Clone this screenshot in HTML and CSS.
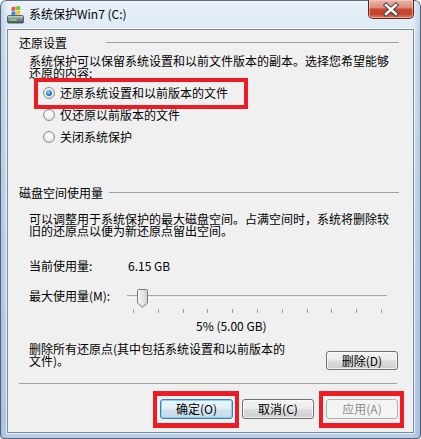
FILE: index.html
```html
<!DOCTYPE html>
<html lang="zh-CN">
<head>
<meta charset="utf-8">
<title>系统保护Win7 (C:)</title>
<link rel="stylesheet" href="styles.css">
</head>
<body>
<div class="window">
  <div class="titlebar">
    <svg class="app-icon" width="18" height="18" viewBox="0 0 18 18">
      <defs>
        <linearGradient id="drv" x1="0" y1="0" x2="0" y2="1">
          <stop offset="0" stop-color="#d9dfe5"/>
          <stop offset="0.35" stop-color="#8f9ba6"/>
          <stop offset="1" stop-color="#46515c"/>
        </linearGradient>
      </defs>
      <path d="M4.5 1.2 L8.4 0.6 L8.4 4.4 L4.5 5 Z" fill="#f0562a"/>
      <path d="M9.2 0.5 L13.2 0 L13.2 3.8 L9.2 4.3 Z" fill="#6fbf2e"/>
      <path d="M4.5 5.8 L8.4 5.2 L8.4 9 L4.5 9.6 Z" fill="#2a8de0"/>
      <path d="M9.2 5.1 L13.2 4.6 L13.2 8.4 L9.2 8.9 Z" fill="#f8c01a"/>
      <rect x="0.5" y="9.5" width="16" height="7.5" rx="1.2" fill="url(#drv)" stroke="#3d4650" stroke-width="0.8"/>
      <rect x="2.5" y="13.2" width="7" height="1.6" fill="#7fe05a"/>
    </svg>
    <span class="title">系统保护Win7 (C:)</span>
    <div class="close">
      <svg width="46" height="19" viewBox="0 0 46 19">
        <path d="M18.5 5 L28.5 14 M28.5 5 L18.5 14" stroke="#3a3a3a" stroke-width="4.6" stroke-linecap="square"/>
        <path d="M18.5 5 L28.5 14 M28.5 5 L18.5 14" stroke="#ffffff" stroke-width="2.6" stroke-linecap="square"/>
      </svg>
    </div>
  </div>

  <div class="client">
    <div class="group-head">
      <span>还原设置</span><span class="rule rule-first"></span>
    </div>
    <p class="desc">系统保护可以保留系统设置和以前文件版本的副本。选择您希望能够<br>还原的内容:</p>

    <div class="radios">
      <div class="radio"><span class="circle checked"></span><span>还原系统设置和以前版本的文件</span></div>
      <div class="radio"><span class="circle"></span><span>仅还原以前版本的文件</span></div>
      <div class="radio"><span class="circle"></span><span>关闭系统保护</span></div>
    </div>

    <div class="group-head group-second">
      <span>磁盘空间使用量</span><span class="rule rule-second"></span>
    </div>
    <p class="desc desc-second">可以调整用于系统保护的最大磁盘空间。占满空间时，系统将删除较<br>旧的还原点以便为新还原点留出空间。</p>

    <div class="stat">
      <span class="stat-label">当前使用量:</span>
      <span class="stat-value">6.15 GB</span>
    </div>

    <div class="max-row">
      <span class="max-label">最大使用量(M):</span>
      <div class="slider">
        <div class="track"></div>
        <div class="thumb">
          <svg width="11" height="19" viewBox="0 0 11 19">
            <defs>
              <linearGradient id="th" x1="0" y1="0" x2="1" y2="0">
                <stop offset="0" stop-color="#f6f6f6"/>
                <stop offset="0.5" stop-color="#e6e6e6"/>
                <stop offset="1" stop-color="#cfcfcf"/>
              </linearGradient>
            </defs>
            <path d="M1.5 0.5 H9.5 Q10.5 0.5 10.5 1.5 V14 L5.5 18.3 L0.5 14 V1.5 Q0.5 0.5 1.5 0.5 Z" fill="url(#th)" stroke="#7a7a7a"/>
          </svg>
        </div>
      </div>
    </div>

    <div class="ticks">
      <i></i><i></i><i></i><i></i><i></i><i></i><i></i><i></i><i></i><i></i><i></i>
    </div>

    <div class="percent">5% (5.00 GB)</div>

    <div class="delete-row">
      <p class="delete-text">删除所有还原点(其中包括系统设置和以前版本的<br>文件)。</p>
      <div class="btn btn-delete">删除(D)</div>
    </div>

    <div class="separator"></div>

    <div class="actions">
      <div class="btn btn-default">确定(O)</div>
      <div class="btn btn-cancel">取消(C)</div>
      <div class="btn btn-disabled">应用(A)</div>
    </div>
  </div>

  <div class="mark mark-radio"></div>
  <div class="mark mark-ok"></div>
  <div class="mark mark-apply"></div>
</div>
</body>
</html>
```

FILE: styles.css
```css
* { box-sizing: border-box; }

html, body {
  margin: 0;
  padding: 0;
  background: #ffffff;
}

body {
  font-family: "Noto Sans CJK SC", "Noto Sans", sans-serif;
  font-size: 12px;
  line-height: 12px;
  color: #000;
}

.window {
  position: relative;
  width: 421px;
  height: 439px;
  border-radius: 6px 6px 4px 4px;
  background:
    linear-gradient(90deg, rgba(120,150,190,0.35) 0px, rgba(255,255,255,0) 8px, rgba(255,255,255,0) 413px, rgba(120,150,190,0.35) 421px),
    linear-gradient(180deg, #eaf2fa 0%, #dce8f5 8%, #cadcef 50%, #b7cfe9 100%);
  box-shadow: inset 0 0 0 1px rgba(50, 65, 85, 0.75);
  overflow: hidden;
}

.titlebar {
  display: flex;
  align-items: flex-start;
  height: 29px;
}

.app-icon {
  margin: 6px 0 0 7px;
  flex: none;
}

.title {
  margin: 7px 0 0 4px;
  font-size: 12px;
  line-height: 14px;
  color: #000;
  white-space: nowrap;
}

.close {
  margin-left: auto;
  margin-right: 7px;
  width: 46px;
  height: 19px;
  border: 1px solid #5a2a22;
  border-top: none;
  border-radius: 0 0 5px 5px;
  background: linear-gradient(180deg, #ebb6a9 0%, #dc8c7a 42%, #c9472f 52%, #c4442e 78%, #dc7c65 100%);
  box-shadow: inset 0 0 0 1px rgba(255, 210, 200, 0.55);
  display: flex;
}

.close svg {
  margin-left: -1px;
}

.client {
  margin: 0 7px;
  height: 404px;
  border: 1px solid #7b8ca2;
  box-shadow: 0 0 0 1px rgba(255, 255, 255, 0.65);
  background: #f0f0f0;
  padding: 0 14px 0 11px;
  display: flex;
  flex-direction: column;
}

.group-head {
  display: flex;
  align-items: center;
  height: 12px;
  margin-top: 7px;
  white-space: nowrap;
}

.group-second {
  margin-top: 44px;
}

.rule {
  flex: 1;
  height: 1px;
  background: #a0a0a0;
  margin-top: -1px;
}

.rule-first { margin-left: 39px; }
.rule-second { margin-left: 6px; }

.desc {
  margin: 6px 0 0 10px;
  line-height: 12px;
  white-space: nowrap;
}

.desc-second {
  margin-top: 14px;
}

.radios {
  margin-top: 8px;
  padding-left: 24px;
  display: flex;
  flex-direction: column;
}

.radio {
  display: flex;
  align-items: center;
  height: 12px;
  gap: 5px;
}

.radio + .radio {
  margin-top: 10px;
}

.circle {
  width: 12px;
  height: 12px;
  border-radius: 50%;
  border: 1px solid #8a8c8e;
  background: radial-gradient(circle at 50% 35%, #ffffff 0%, #f1f1f1 45%, #d4d4d4 100%);
  flex: none;
  position: relative;
}

.circle.checked::after {
  content: "";
  position: absolute;
  left: 2px;
  top: 2px;
  width: 6px;
  height: 6px;
  border-radius: 50%;
  background: radial-gradient(circle at 40% 35%, #9fe0ff 0%, #2f8ed8 45%, #0e4b86 100%);
}

.stat {
  margin-top: 23px;
  padding-left: 10px;
  display: flex;
  height: 12px;
  white-space: nowrap;
}

.stat-label { width: 99px; }

.max-row {
  margin-top: 18px;
  padding-left: 10px;
  display: flex;
  height: 12px;
  white-space: nowrap;
}

.max-label { width: 98px; }

.slider {
  position: relative;
  width: 260px;
  height: 12px;
}

.track {
  margin-top: 5px;
  height: 3px;
  border-top: 1px solid #a9a9a9;
  border-bottom: 1px solid #ffffff;
  background: #e4e4e4;
}

.thumb {
  position: absolute;
  left: 10px;
  top: -1px;
  width: 11px;
  height: 19px;
}

.thumb svg { display: block; }

.ticks {
  margin: 7px 0 0 114px;
  width: 249px;
  height: 4px;
  display: flex;
  justify-content: space-between;
}

.ticks i {
  display: block;
  width: 1px;
  height: 4px;
  background: #9a9a9a;
}

.percent {
  margin-top: 7px;
  padding-left: 177px;
  height: 12px;
  white-space: nowrap;
}

.delete-row {
  margin-top: 11px;
  padding-left: 10px;
  display: flex;
  align-items: flex-start;
}

.delete-text {
  margin: 0;
  white-space: nowrap;
}

.btn {
  height: 20px;
  width: 73px;
  border: 1px solid #707070;
  border-radius: 3px;
  background: linear-gradient(180deg, #f3f3f3 0%, #ebebeb 48%, #dddddd 52%, #cfcfcf 100%);
  box-shadow: inset 0 0 0 1px rgba(255, 255, 255, 0.75);
  display: flex;
  align-items: center;
  justify-content: center;
  white-space: nowrap;
  line-height: 12px;
}

.btn-delete {
  margin: 8px 1px 0 auto;
  width: 72px;
  height: 19px;
}

.separator {
  margin: 13px 2px 0 0;
  height: 1px;
  background: #a0a0a0;
  flex: none;
}

.actions {
  margin-top: 15px;
  display: flex;
  justify-content: flex-end;
  padding-right: 1px;
}

.btn-default {
  border-color: #3c7fb1;
  background: linear-gradient(180deg, #eef5fa 0%, #e3eef6 48%, #d2e2ee 52%, #c5d8e7 100%);
  box-shadow: inset 0 0 0 1px #7fd3f5;
}

.btn-cancel {
  margin-left: 9px;
  width: 72px;
}

.btn-disabled {
  margin-left: 12px;
  width: 72px;
  border-color: #adb2b5;
  background: #f4f4f4;
  box-shadow: none;
  color: #8d8d8d;
}

.mark {
  position: absolute;
  border: 4px solid #ed1c24;
}

.mark-radio {
  left: 34px;
  top: 78px;
  width: 214px;
  height: 31px;
}

.mark-ok {
  left: 153px;
  top: 391px;
  width: 86px;
  height: 37px;
  border-width: 5px 4px;
}

.mark-apply {
  left: 319px;
  top: 391px;
  width: 85px;
  height: 37px;
  border-width: 5px 4px;
}
```
